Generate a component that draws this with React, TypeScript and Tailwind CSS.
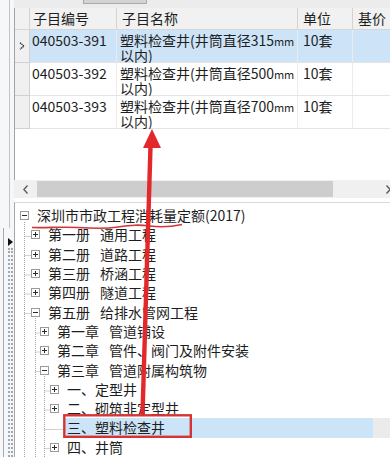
import React from "react";

function TreeBox({ open }: { open: boolean }) {
  return (
    <svg width="9" height="9" viewBox="0 0 9 9" className="shrink-0">
      <rect x="0.5" y="0.5" width="8" height="8" fill="#fff" stroke="#9a9a9a" />
      <path d="M2 4.5h5" stroke="#2a2a2a" strokeWidth="1" />
      {!open && <path d="M4.5 2v5" stroke="#2a2a2a" strokeWidth="1" />}
    </svg>
  );
}

type Node = {
  indent: string;
  box: "open" | "closed" | "none";
  a: string;
  b?: string;
  selected?: boolean;
};

const nodes: Node[] = [
  { indent: "pl-[5px]", box: "open", a: "深圳市市政工程消耗量定额(2017)" },
  { indent: "pl-[16px]", box: "closed", a: "第一册", b: "通用工程" },
  { indent: "pl-[16px]", box: "closed", a: "第二册", b: "道路工程" },
  { indent: "pl-[16px]", box: "closed", a: "第三册", b: "桥涵工程" },
  { indent: "pl-[16px]", box: "closed", a: "第四册", b: "隧道工程" },
  { indent: "pl-[16px]", box: "open", a: "第五册", b: "给排水管网工程" },
  { indent: "pl-[25px]", box: "closed", a: "第一章", b: "管道铺设" },
  { indent: "pl-[25px]", box: "closed", a: "第二章", b: "管件、阀门及附件安装" },
  { indent: "pl-[25px]", box: "open", a: "第三章", b: "管道附属构筑物" },
  { indent: "pl-[35px]", box: "closed", a: "一、定型井" },
  { indent: "pl-[35px]", box: "closed", a: "二、砌筑非定型井" },
  { indent: "pl-[35px]", box: "none", a: "三、塑料检查井", selected: true },
  { indent: "pl-[35px]", box: "closed", a: "四、井筒" },
];

const rows = [
  { code: "040503-391", size: "315", unit: "10套", selected: true },
  { code: "040503-392", size: "500", unit: "10套" },
  { code: "040503-393", size: "700", unit: "10套" },
];

export default function App() {
  return (
    <div className="relative w-[390px] h-[457px] overflow-hidden bg-white flex font-['Noto_Sans_CJK_SC',sans-serif] text-[14px] text-[#1e1e1e]">
      {/* left strip */}
      <div className="w-[14px] shrink-0 flex flex-col bg-[#f6f7f9]">
        <div className="h-[228px] flex">
          <div className="ml-[9px] w-px bg-[#bcc6d0]" />
        </div>
        <div className="flex-1 flex">
          <div className="ml-[3px] w-px bg-[#a9a9a9]" />
          <div className="ml-[4px] flex flex-col items-start">
            <svg width="5" height="8" viewBox="0 0 5 8" className="mt-[10px]">
              <path d="M0 0L5 4L0 8Z" fill="#111" />
            </svg>
            <div className="mt-[2px] flex-1 w-[5px] border-x-2 border-dotted border-[#9ea8b2]" />
          </div>
        </div>
      </div>

      {/* main column */}
      <div className="flex-1 flex flex-col min-w-0">
        <div className="h-[8px] bg-[#ececec] flex shrink-0">
          <div className="ml-[69px] w-[64px] h-[4px] bg-[#d3d3d3] border-x border-b border-[#a9a9a9]" />
        </div>

        {/* grid */}
        <div className="border-l border-[#a3a3a3] flex flex-col shrink-0">
          <div className="h-[22px] flex bg-[#f1f1f1] border-b border-[#d6d6d6] leading-[21px]">
            <div className="w-[15px] border-r border-[#d3d3d3]" />
            <div className="w-[87px] pl-[3px] border-r border-[#d3d3d3]">子目编号</div>
            <div className="w-[181px] pl-[5px] border-r border-[#d3d3d3]">子目名称</div>
            <div className="w-[55px] pl-[5px] border-r border-[#d3d3d3]">单位</div>
            <div className="flex-1 pl-[5px] whitespace-nowrap overflow-hidden">基价</div>
          </div>
          {rows.map((r) => (
            <div key={r.code} className="h-[33px] flex">
              <div className="w-[15px] bg-[#f0f0f0] border-r border-b border-[#d0d0d0] flex items-center pl-[4px]">
                {r.selected && (
                  <svg width="6" height="8" viewBox="0 0 6 8">
                    <path d="M1 0.8L5 4L1 7.2" fill="none" stroke="#333" strokeWidth="1.4" strokeDasharray="1.3 0.6" />
                  </svg>
                )}
              </div>
              <div className={`flex-1 flex border-b border-[#e4e4e4] leading-[14px] ${r.selected ? "bg-[#cde3f7]" : "bg-white"}`}>
                <div className="w-[87px] pl-[2px] border-r border-[#ececec] pt-[3px]">{r.code}</div>
                <div className="w-[181px] pl-[3px] border-r border-[#ececec] overflow-x-clip whitespace-nowrap pt-[3px]">
                  <div>
                    塑料检查井(井筒直径{r.size}
                    <span className="text-[11px] tracking-[-0.3px]">mm</span>
                  </div>
                  <div>以内)</div>
                </div>
                <div className="w-[55px] pl-[5px] border-r border-[#ececec] pt-[3px]">{r.unit}</div>
                <div className="flex-1" />
              </div>
            </div>
          ))}
          <div className="h-[51px] bg-white" />
        </div>

        {/* horizontal scrollbar */}
        <div className="h-[18px] bg-[#f0f0f0] flex items-center shrink-0 overflow-hidden">
          <svg width="5" height="9" viewBox="0 0 5 9" className="ml-[9px] shrink-0">
            <path d="M4.5 0.5L0.8 4.5L4.5 8.5" fill="none" stroke="#555" strokeWidth="1.3" />
          </svg>
          <div className="ml-[9px] w-[296px] h-[16px] bg-[#cdcdcd] shrink-0" />
          <svg width="5" height="9" viewBox="0 0 5 9" className="ml-[53px] shrink-0">
            <path d="M0.5 0.5L4.2 4.5L0.5 8.5" fill="none" stroke="#555" strokeWidth="1.3" />
          </svg>
        </div>
        <div className="h-[4px] bg-white shrink-0" />

        {/* tree */}
        <div className="relative flex-1 border-l border-t border-l-[#a8a8a8] border-t-[#dadada] pt-[3px] bg-white">
          <svg className="absolute left-0 top-0" width="376" height="260">
            <g stroke="#a3a3a3" strokeWidth="1" strokeDasharray="1 1" fill="none">
              <path d="M9.5 19V260" />
              <path d="M9.5 33.5H16M9.5 52.5H16M9.5 72H16M9.5 91H16M9.5 110.5H16" />
              <path d="M20.5 115V260" />
              <path d="M20.5 130H25M20.5 149H25M20.5 168.5H25" />
              <path d="M29.5 173V260" />
              <path d="M29.5 188H35M29.5 207H35M29.5 226.5H49M29.5 245.5H35" />
            </g>
          </svg>
          {nodes.map((n, i) => (
            <div key={i} className={`relative h-[19.3px] flex items-center whitespace-nowrap ${n.indent}`}>
              {n.box === "none" ? (
                <span className="w-[9px] shrink-0" />
              ) : (
                <TreeBox open={n.box === "open"} />
              )}
              {n.selected ? (
                <>
                  <span className="ml-[6px] pl-[2px] flex-1 h-full flex items-center bg-[#cce4f7]">{n.a}</span>
                  <span className="w-[17px] h-full bg-[#ebebeb]" />
                </>
              ) : (
                <span className="ml-[6px] pl-[2px]">
                  {n.a}
                  {n.b && <span className="ml-[10px]">{n.b}</span>}
                </span>
              )}
            </div>
          ))}
        </div>
      </div>

      {/* red annotations */}
      <svg className="absolute inset-0 pointer-events-none" width="390" height="457" viewBox="0 0 390 457">
        <path
          d="M32 227.5C48 228 62 226.5 78 227.5S104 229 118 227S138 224.5 150 226S170 227 182 224.5"
          fill="none"
          stroke="#d2353a"
          strokeWidth="1.6"
        />
        <polygon points="148.3,146 152.7,146 144.7,414 140.3,414" fill="#e3282c" />
        <polygon points="152,129 161,148 143,148" fill="#e3282c" />
        <rect x="64.3" y="415.3" width="126.5" height="21.5" fill="none" stroke="#d63434" strokeWidth="2.4" />
      </svg>
    </div>
  );
}
